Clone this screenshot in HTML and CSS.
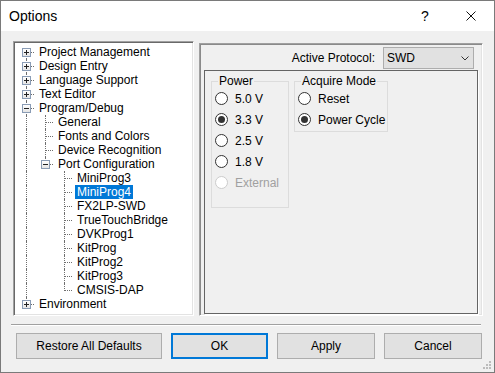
FILE: index.html
```html
<!DOCTYPE html>
<html lang="en">
    <head>
        <meta charset="utf-8">
        <title>Options</title>
        <link rel="stylesheet" href="styles.css">
    </head>
    <body>
        <div class="window">
            <div class="titlebar">
                <span class="title">Options</span>
                <span class="caption-btn help">?</span>
                <span class="caption-btn close">
                    <svg width="10" height="10" viewBox="0 0 10 10"><path d="M0.5 0.5 L9.5 9.5 M9.5 0.5 L0.5 9.5" stroke="#111" stroke-width="1" fill="none"/></svg>
                </span>
            </div>
            <div class="dialog">
                <div class="main">
                    <div class="tree">
                        <div class="node"><span class="joint first"><i class="box plus"></i></span><span class="label">Project Management</span></div>
                        <div class="node"><span class="joint"><i class="box plus"></i></span><span class="label">Design Entry</span></div>
                        <div class="node"><span class="joint"><i class="box plus"></i></span><span class="label">Language Support</span></div>
                        <div class="node"><span class="joint"><i class="box plus"></i></span><span class="label">Text Editor</span></div>
                        <div class="node"><span class="joint"><i class="box"></i></span><span class="label">Program/Debug</span></div>
                        <div class="node"><span class="ind line"></span><span class="joint"></span><span class="label">General</span></div>
                        <div class="node"><span class="ind line"></span><span class="joint"></span><span class="label">Fonts and Colors</span></div>
                        <div class="node"><span class="ind line"></span><span class="joint"></span><span class="label">Device Recognition</span></div>
                        <div class="node"><span class="ind line"></span><span class="joint last"><i class="box"></i></span><span class="label">Port Configuration</span></div>
                        <div class="node"><span class="ind line"></span><span class="ind"></span><span class="joint"></span><span class="label">MiniProg3</span></div>
                        <div class="node"><span class="ind line"></span><span class="ind"></span><span class="joint"></span><span class="label selected">MiniProg4</span></div>
                        <div class="node"><span class="ind line"></span><span class="ind"></span><span class="joint"></span><span class="label">FX2LP-SWD</span></div>
                        <div class="node"><span class="ind line"></span><span class="ind"></span><span class="joint"></span><span class="label">TrueTouchBridge</span></div>
                        <div class="node"><span class="ind line"></span><span class="ind"></span><span class="joint"></span><span class="label">DVKProg1</span></div>
                        <div class="node"><span class="ind line"></span><span class="ind"></span><span class="joint"></span><span class="label">KitProg</span></div>
                        <div class="node"><span class="ind line"></span><span class="ind"></span><span class="joint"></span><span class="label">KitProg2</span></div>
                        <div class="node"><span class="ind line"></span><span class="ind"></span><span class="joint"></span><span class="label">KitProg3</span></div>
                        <div class="node"><span class="ind line"></span><span class="ind"></span><span class="joint last"></span><span class="label">CMSIS-DAP</span></div>
                        <div class="node"><span class="joint last"><i class="box plus"></i></span><span class="label">Environment</span></div>
                    </div>
                    <div class="panel">
                        <div class="protocol">
                            <span class="protocol-label">Active Protocol:</span>
                            <div class="combo">
                                <span>SWD</span>
                                <svg width="8" height="5" viewBox="0 0 8 5"><path d="M0.5 0.5 L4 4 L7.5 0.5" stroke="#333" stroke-width="1" fill="none"/></svg>
                            </div>
                        </div>
                        <div class="page">
                            <fieldset class="group power">
                                <legend>Power</legend>
                                <div class="radio"><span class="dot"></span>5.0 V</div>
                                <div class="radio checked"><span class="dot"></span>3.3 V</div>
                                <div class="radio"><span class="dot"></span>2.5 V</div>
                                <div class="radio"><span class="dot"></span>1.8 V</div>
                                <div class="radio disabled"><span class="dot"></span>External</div>
                            </fieldset>
                            <fieldset class="group acquire">
                                <legend>Acquire Mode</legend>
                                <div class="radio"><span class="dot"></span>Reset</div>
                                <div class="radio checked"><span class="dot"></span>Power Cycle</div>
                            </fieldset>
                        </div>
                    </div>
                </div>
                <div class="separator"></div>
                <div class="buttons">
                    <button class="btn restore">Restore All Defaults</button>
                    <button class="btn default">OK</button>
                    <button class="btn">Apply</button>
                    <button class="btn">Cancel</button>
                </div>
                <svg class="grip" width="9" height="9" viewBox="0 0 9 9">
                    <rect x="6" y="0" width="2" height="2" fill="#bcbcbc"/>
                    <rect x="3" y="3" width="2" height="2" fill="#bcbcbc"/>
                    <rect x="6" y="3" width="2" height="2" fill="#bcbcbc"/>
                    <rect x="0" y="6" width="2" height="2" fill="#bcbcbc"/>
                    <rect x="3" y="6" width="2" height="2" fill="#bcbcbc"/>
                    <rect x="6" y="6" width="2" height="2" fill="#bcbcbc"/>
                </svg>
            </div>
        </div>
    </body>
</html>
```

FILE: styles.css
```css
body, html {
    padding: 0;
    margin: 0;
    font-family: "Liberation Sans", Arial, sans-serif;
    font-size: 12px;
    color: #000;
}
* {
    box-sizing: border-box;
}
.window {
    width: 495px;
    height: 373px;
    border: 1px solid #7a7a7a;
    background: #f0f0f0;
    display: flex;
    flex-direction: column;
}
.titlebar {
    height: 30px;
    background: #fff;
    display: flex;
    align-items: center;
}
.title {
    font-size: 14px;
    padding-left: 8px;
    flex: 1;
}
.caption-btn {
    width: 46px;
    height: 30px;
    display: flex;
    align-items: center;
    justify-content: center;
    font-size: 14px;
}
.dialog {
    position: relative;
    flex: 1;
    padding: 10px 11px 0 12px;
    display: flex;
    flex-direction: column;
}
.main {
    display: flex;
    height: 275px;
}

/* tree view */
.tree {
    width: 181px;
    height: 275px;
    background: #fff;
    border: 1px solid;
    border-color: #a0a0a0 #fff #fff #a0a0a0;
    box-shadow: inset 1px 1px 0 #696969, inset -1px -1px 0 #e3e3e3;
    padding: 3px 0 0 1px;
    overflow: hidden;
}
.node {
    display: flex;
    height: 14px;
    line-height: 14px;
    white-space: nowrap;
}
.ind, .joint {
    position: relative;
    width: 19px;
    height: 14px;
    flex: none;
}
.ind.line::before, .joint::before {
    content: "";
    position: absolute;
    left: 11px;
    top: 0;
    height: 14px;
    border-left: 1px dotted #6e6e6e;
}
.joint.first::before {
    top: 7px;
    height: 7px;
}
.joint.last::before {
    height: 8px;
}
.joint::after {
    content: "";
    position: absolute;
    left: 12px;
    top: 7px;
    width: 7px;
    border-top: 1px dotted #6e6e6e;
}
.box {
    position: absolute;
    left: 7px;
    top: 3px;
    width: 9px;
    height: 9px;
    border: 1px solid #8a9cb5;
    background: linear-gradient(#fff, #e4e4e4);
    z-index: 1;
}
.box::before {
    content: "";
    position: absolute;
    left: 1px;
    top: 3px;
    width: 5px;
    height: 1px;
    background: #222;
}
.box.plus::after {
    content: "";
    position: absolute;
    left: 3px;
    top: 1px;
    width: 1px;
    height: 5px;
    background: #222;
}
.label {
    margin-left: 3px;
    padding: 0 2px;
}
.label.selected {
    background: #0078d7;
    color: #fff;
}

/* right side */
.panel {
    width: 284px;
    height: 273px;
    margin: 2px 0 0 5px;
    border: 1px solid;
    border-color: #a0a0a0 #fff #fff #a0a0a0;
    box-shadow: inset 1px 1px 0 #8a8a8a, inset -1px -1px 0 #e3e3e3;
    padding: 1px;
    display: flex;
    flex-direction: column;
}
.protocol {
    display: flex;
    justify-content: flex-end;
    align-items: center;
    margin-top: 2px;
    margin-bottom: 1px;
    padding-right: 7px;
}
.protocol-label {
    margin-right: 8px;
}
.combo {
    width: 91px;
    height: 22px;
    background: #e1e1e1;
    border: 1px solid #adadad;
    display: flex;
    align-items: center;
    justify-content: space-between;
    padding: 0 4px 0 3px;
}
.page {
    flex: 1;
    margin: 0 3px;
    border: 1px solid #646464;
    box-shadow: 1px 1px 0 #fff;
    display: flex;
    align-items: flex-start;
    padding: 3px 0 0 6px;
}
.group {
    margin: 0;
    padding: 0 0 0 3px;
    border: 1px solid #dcdcdc;
    min-inline-size: 0;
}
.group legend {
    margin-left: 3px;
    padding: 0 1px;
    line-height: 14px;
}
.power {
    width: 78px;
    padding-bottom: 14px;
}
.acquire {
    width: 94px;
    margin-left: 5px;
    padding-bottom: 1px;
}
.radio {
    display: flex;
    align-items: center;
    height: 21px;
    white-space: nowrap;
}
.dot {
    width: 13px;
    height: 13px;
    border: 1px solid #333;
    border-radius: 50%;
    background: #fff;
    margin-right: 7px;
    display: flex;
    align-items: center;
    justify-content: center;
}
.radio.checked .dot::after {
    content: "";
    width: 7px;
    height: 7px;
    border-radius: 50%;
    background: #333;
}
.radio.disabled {
    color: #a0a0a0;
}
.radio.disabled .dot {
    border-color: #cccccc;
}

/* bottom */
.separator {
    margin: 8px 0 0 -2px;
    width: 470px;
    border-top: 1px solid #a0a0a0;
    border-bottom: 1px solid #fff;
}
.buttons {
    display: flex;
    gap: 9px;
    margin: 7px 0 0 3px;
}
.btn {
    font-family: "Liberation Sans", Arial, sans-serif;
    font-size: 12px;
    color: #000;
    width: 98px;
    height: 26px;
    background: #e1e1e1;
    border: 1px solid #adadad;
    padding: 0;
}
.btn.restore {
    width: 146px;
}
.btn.default {
    width: 97px;
    border: 2px solid #0078d7;
}
.grip {
    position: absolute;
    right: 2px;
    bottom: 2px;
}
```
